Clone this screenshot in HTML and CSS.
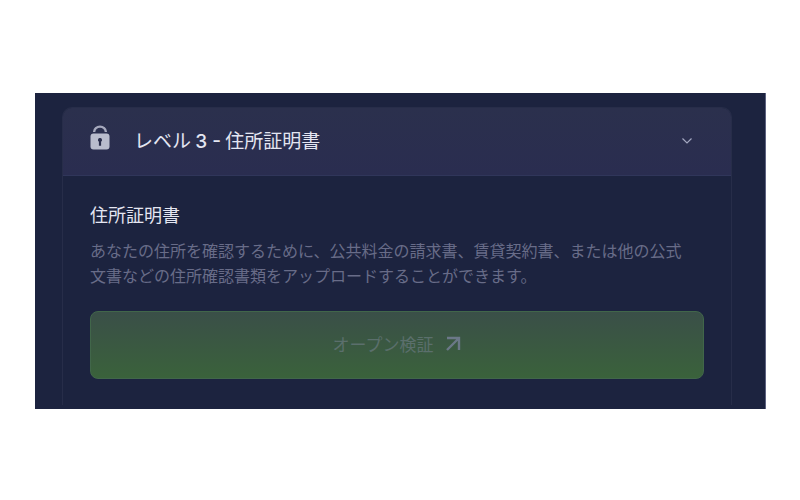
FILE: index.html
```html
<!DOCTYPE html>
<html lang="ja">
<head>
    <meta charset="UTF-8">
    <meta name="viewport" content="width=device-width, initial-scale=1.0">
    <title>住所証明書</title>
    <link rel="stylesheet" href="styles.css">
</head>
<body>
    <main class="panel">
        <section class="card">
            <button class="card-header" type="button" aria-expanded="true">
                <svg class="lock" viewBox="0 0 20 26" aria-hidden="true">
                    <path d="M4.2 7V6.600a5.800 5 0 0 1 11.600 0V7" fill="none" stroke="#a6a9bd" stroke-width="2.4"/>
                    <rect x="0.5" y="8.5" width="19" height="16" rx="3" fill="#b9bccd"/>
                    <path d="M10 13a2 2 0 0 1 1.100 3.700v4H8.900v-4A2 2 0 0 1 10 13z" fill="#2a2e4c"/>
                </svg>
                <span class="card-title">レベル <span class="latin">3 -</span> 住所証明書</span>
                <svg class="chevron" viewBox="0 0 12 8" aria-hidden="true">
                    <path d="M1.5 1.500L6 6l4.500-4.500" fill="none" stroke="#a3a7c0" stroke-width="1.2"/>
                </svg>
            </button>
            <div class="card-body">
                <h2>住所証明書</h2>
                <p>あなたの住所を確認するために、公共料金の請求書、賃貸契約書、または他の公式<br>文書などの住所確認書類をアップロードすることができます。</p>
                <button class="verify" type="button" disabled>
                    オープン検証
                    <svg class="arrow" viewBox="0 0 16 16" aria-hidden="true">
                        <path d="M2 3h12v12M14 3L2 15" fill="none" stroke="#6b7888" stroke-width="2.4"/>
                    </svg>
                </button>
            </div>
        </section>
    </main>
</body>
</html>
```
FILE: styles.css
```css
body{
    margin: 0;
    background-color: #fff;
    font-family: "Noto Sans CJK JP", sans-serif;
}
button{
    font-family: inherit;
    box-sizing: border-box;
    width: 100%;
    display: flex;
    align-items: center;
}

.panel{
    margin: 93px 34px 0 35px;
    padding: 14px 33px 4px 27px;
    background-color: #1c233f;
    border-right: 1px solid #5d6280;
}
.card{
    border: 1px solid #272d49;
    border-bottom: none;
    border-radius: 10px 10px 0 0;
}
.card-header{
    height: 68px;
    padding: 0 38px 2px 27px;
    border: none;
    border-bottom: 1px solid #30365a;
    border-radius: 9px 9px 0 0;
    background: linear-gradient(#2b304d, #2a2d50);
    color: #e4e6f2;
    text-align: left;
}
.lock{
    width: 20px;
    height: 26px;
    margin-bottom: 6px;
}
.card-title{
    flex: 1;
    margin-left: 24px;
    font-size: 19px;
    line-height: 28px;
}
.latin{
    font-family: Inter, "Noto Sans CJK JP", sans-serif;
    font-weight: 500;
}
.chevron{
    width: 12px;
    height: 8px;
}

.card-body{
    padding: 25px 27px 26px;
}
h2{
    margin: 0;
    color: #e4e6f2;
    font-size: 18px;
    font-weight: 400;
    line-height: 26px;
}
p{
    margin: 11px 0 23px;
    color: #686c88;
    font-size: 16px;
    line-height: 25px;
}
.verify{
    justify-content: center;
    gap: 12px;
    height: 68px;
    padding: 0 0 4px;
    border: 1px solid #41664a;
    border-radius: 8px;
    background: linear-gradient(#3a4f48, #3a623b);
    color: #5b6f6c;
    font-size: 17px;
}
.arrow{
    width: 16px;
    height: 16px;
}
```
